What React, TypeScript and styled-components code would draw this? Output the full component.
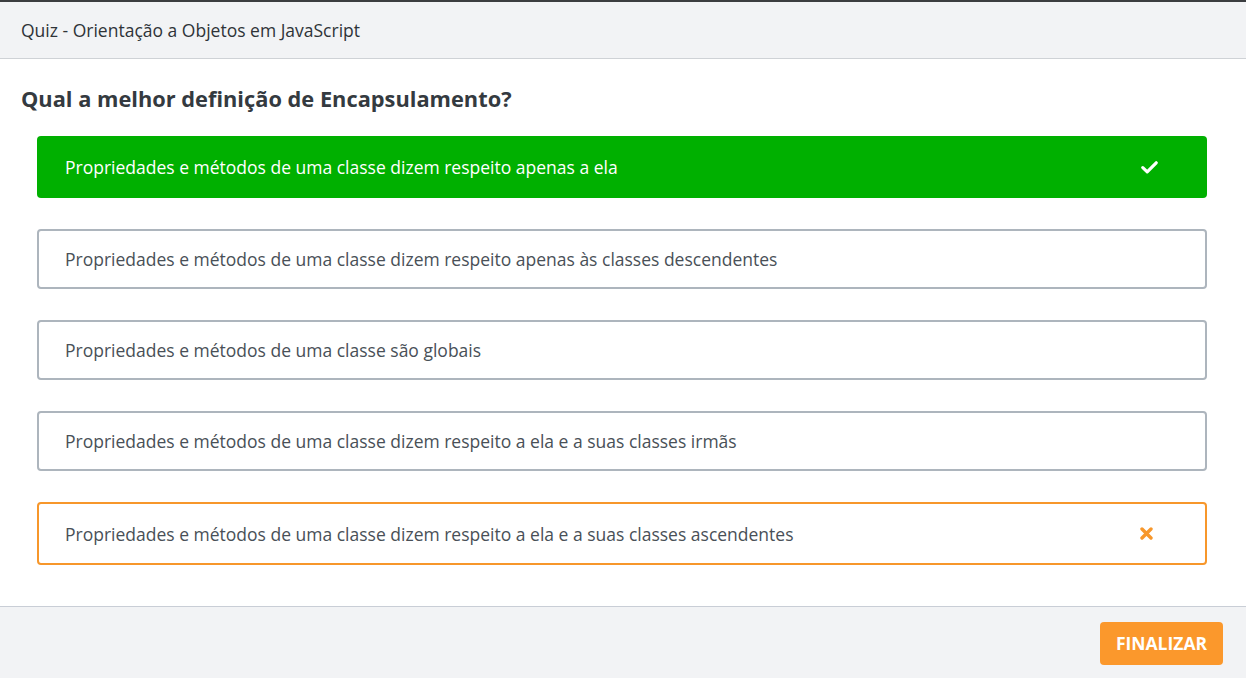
import React from "react";
import styled, { createGlobalStyle } from "styled-components";

const Global = createGlobalStyle`
  html, body { margin: 0; padding: 0; }
  body { font-family: "Open Sans", "Noto Sans", sans-serif; background: #fff; color: #343a40; }
  #root { height: 678px; }
`;

const Page = styled.div`
  height: 678px;
  display: flex;
  flex-direction: column;
  box-sizing: border-box;
  border-top: 2px solid #3b3d40;
`;

const Header = styled.header`
  height: 57px;
  flex: none;
  box-sizing: border-box;
  display: flex;
  align-items: center;
  padding: 0 21px;
  background: #f2f3f5;
  border-bottom: 1px solid #cfd2d6;
  font-size: 17.5px;
  color: #2f3338;
`;

const Main = styled.main`
  flex: 1;
  padding: 26px 39px 0 21px;
`;

const Question = styled.h1`
  margin: 0 0 23px 0;
  font-size: 21.8px;
  font-weight: 700;
  color: #343a40;
  line-height: 28px;
`;

const Options = styled.div`
  display: flex;
  flex-direction: column;
  gap: 31px;
  padding-left: 16px;
`;

type Variant = "correct" | "wrong" | "normal";

const Option = styled.div<{ $variant: Variant }>`
  box-sizing: border-box;
  height: ${(p) => (p.$variant === "correct" ? 62 : p.$variant === "wrong" ? 63 : 60)}px;
  display: flex;
  align-items: center;
  justify-content: space-between;
  padding: 0 ${(p) => (p.$variant === "wrong" ? 52 : 49)}px 0 ${(p) => (p.$variant === "correct" ? 28 : 26)}px;
  border-radius: 4px;
  font-size: 17.5px;
  background: ${(p) => (p.$variant === "correct" ? "#00b000" : "#fff")};
  color: ${(p) => (p.$variant === "correct" ? "#fff" : "#495057")};
  font-weight: ${(p) => (p.$variant === "correct" ? 500 : 400)};
  border: ${(p) =>
    p.$variant === "correct"
      ? "none"
      : p.$variant === "wrong"
      ? "2px solid #f7972b"
      : "2px solid #adb5bd"};
`;

const Footer = styled.footer`
  height: 72px;
  flex: none;
  box-sizing: border-box;
  background: #f2f3f5;
  border-top: 1px solid #c9ced6;
  display: flex;
  align-items: center;
  justify-content: flex-end;
  padding: 0 23px 0 0;
`;

const Button = styled.button`
  width: 123px;
  height: 43px;
  border: none;
  border-radius: 4px;
  background: #fb982c;
  color: #fff;
  font-family: "Open Sans", sans-serif;
  font-weight: 700;
  font-size: 17.5px;
  cursor: pointer;
  margin-top: 1px;
`;

const Check = () => (
  <svg width="17" height="13" viewBox="0 0 17 13">
    <path d="M1.8 6.6 L6.2 10.8 L15.2 1.8" fill="none" stroke="#fff" strokeWidth="3.2" strokeLinecap="round" strokeLinejoin="round" />
  </svg>
);

const Cross = () => (
  <svg width="13" height="13" viewBox="0 0 13 13">
    <path d="M2 2 L11 11 M11 2 L2 11" fill="none" stroke="#f7972b" strokeWidth="3.4" strokeLinecap="round" />
  </svg>
);

const options: { text: string; v: Variant }[] = [
  { text: "Propriedades e métodos de uma classe dizem respeito apenas a ela", v: "correct" },
  { text: "Propriedades e métodos de uma classe dizem respeito apenas às classes descendentes", v: "normal" },
  { text: "Propriedades e métodos de uma classe são globais", v: "normal" },
  { text: "Propriedades e métodos de uma classe dizem respeito a ela e a suas classes irmãs", v: "normal" },
  { text: "Propriedades e métodos de uma classe dizem respeito a ela e a suas classes ascendentes", v: "wrong" },
];

export default function App() {
  return (
    <>
      <Global />
      <Page>
        <Header>Quiz - Orientação a Objetos em JavaScript</Header>
        <Main>
          <Question>Qual a melhor definição de Encapsulamento?</Question>
          <Options>
            {options.map((o) => (
              <Option key={o.text} $variant={o.v}>
                <span>{o.text}</span>
                {o.v === "correct" && <Check />}
                {o.v === "wrong" && <Cross />}
              </Option>
            ))}
          </Options>
        </Main>
        <Footer>
          <Button>FINALIZAR</Button>
        </Footer>
      </Page>
    </>
  );
}
